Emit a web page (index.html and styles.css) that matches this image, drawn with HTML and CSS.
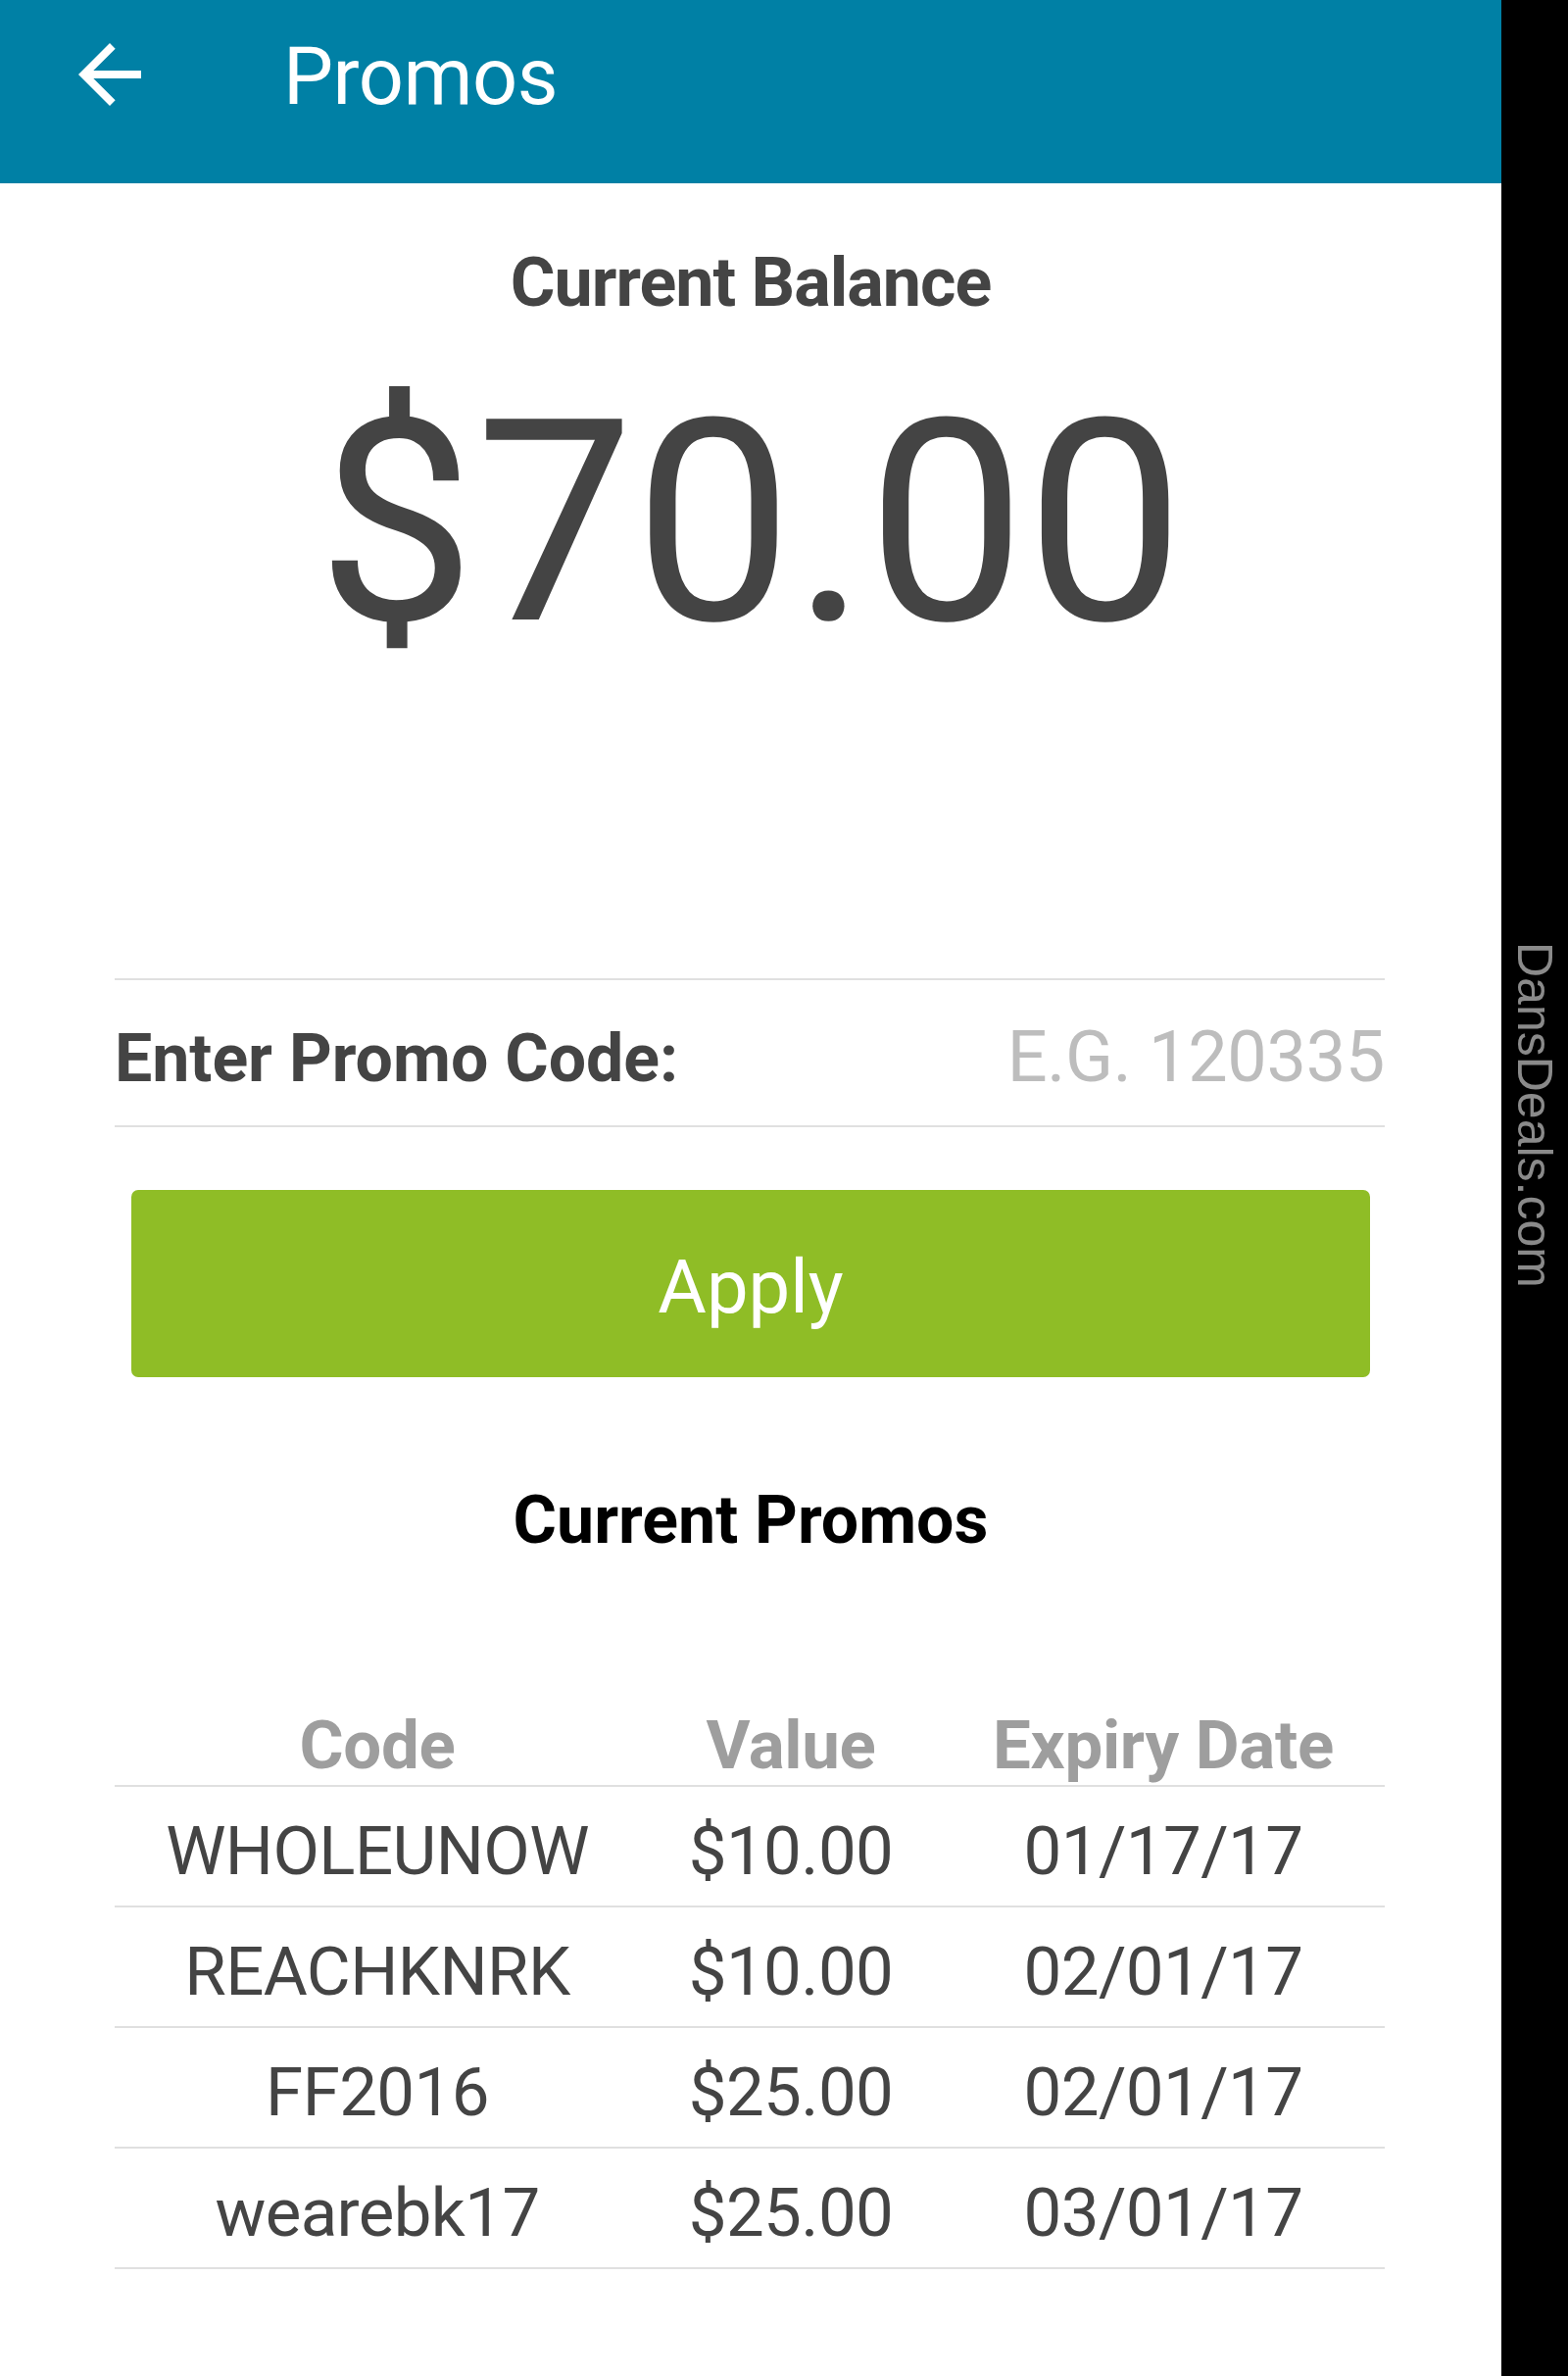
FILE: index.html
```html
<!DOCTYPE html>
<html lang="en">
<head>
<meta charset="utf-8">
<title>Promos</title>
<link rel="stylesheet" href="styles.css">
</head>
<body>
<div class="screen">
  <main class="app">
    <header class="appbar">
      <button class="back" aria-label="Back">
        <svg viewBox="0 0 24 24" width="96" height="96"><path d="M20 11H7.83l5.59-5.59L12 4l-8 8 8 8 1.41-1.41L7.83 13H20v-2z" fill="#ffffff"/></svg>
      </button>
      <h1 class="title">Promos</h1>
    </header>

    <section class="balance">
      <div class="balance-label">Current Balance</div>
      <div class="balance-amount">$70.00</div>
    </section>

    <section class="promo-form">
      <label class="promo-row">
        <span class="promo-label">Enter Promo Code:</span>
        <input class="promo-input" type="text" placeholder="E.G. 120335">
      </label>
      <button class="apply">Apply</button>
    </section>

    <h2 class="promos-title">Current Promos</h2>

    <div class="promo-table">
      <div class="tr th"><div>Code</div><div>Value</div><div>Expiry Date</div></div>
      <div class="tr"><div>WHOLEUNOW</div><div>$10.00</div><div>01/17/17</div></div>
      <div class="tr"><div>REACHKNRK</div><div>$10.00</div><div>02/01/17</div></div>
      <div class="tr"><div>FF2016</div><div>$25.00</div><div>02/01/17</div></div>
      <div class="tr"><div>wearebk17</div><div>$25.00</div><div>03/01/17</div></div>
    </div>
  </main>
  <aside class="strip">
    <span class="watermark">DansDeals.com</span>
  </aside>
</div>
</body>
</html>
```

FILE: styles.css
```css
html, body {
  margin: 0;
  padding: 0;
  background: #ffffff;
}

.screen {
  display: flex;
  width: 1600px;
  min-height: 2424px;
  font-family: Roboto, "Noto Sans", sans-serif;
}

.app {
  width: 1532px;
  flex: none;
  background: #ffffff;
}

.appbar {
  height: 187px;
  box-sizing: border-box;
  background: #0080a5;
  display: flex;
  align-items: flex-start;
  padding: 28px 0 0 64px;
}

.back {
  width: 96px;
  height: 96px;
  padding: 0;
  margin: 0;
  border: none;
  background: transparent;
  display: block;
}

.back svg {
  display: block;
}

.title {
  margin: 0 0 0 129px;
  padding-top: 3px;
  font-size: 81px;
  line-height: 96px;
  font-weight: 400;
  letter-spacing: -0.5px;
  color: #ffffff;
}

.balance {
  text-align: center;
  color: #444444;
}

.balance-label {
  margin-top: 60px;
  font-size: 70px;
  line-height: 82px;
  font-weight: 700;
  letter-spacing: -1px;
}

.balance-amount {
  margin-top: 61px;
  font-size: 288px;
  line-height: 288px;
  font-weight: 400;
}

.promo-form {
  margin: 320px 119px 0 117px;
}

.promo-row {
  display: flex;
  justify-content: space-between;
  align-items: baseline;
  height: 152px;
  box-sizing: border-box;
  border-top: 2px solid #e0e0e0;
  border-bottom: 2px solid #e0e0e0;
  padding-top: 10px;
}

.promo-label {
  font-size: 68px;
  line-height: 138px;
  font-weight: 700;
  color: #444444;
}

.promo-input {
  width: 640px;
  height: 138px;
  padding: 0;
  margin: 0;
  border: none;
  outline: none;
  background: transparent;
  text-align: right;
  font-family: Roboto, "Noto Sans", sans-serif;
  font-size: 72px;
  line-height: 138px;
  letter-spacing: -0.3px;
  color: #444444;
}

.promo-input::placeholder {
  color: #bdbdbd;
  opacity: 1;
}

.apply {
  display: block;
  width: calc(100% - 32px);
  height: 191px;
  margin: 64px 15px 0 17px;
  padding: 7px 0 0;
  border: none;
  border-radius: 7px;
  background: #8fbd26;
  color: #ffffff;
  font-family: Roboto, "Noto Sans", sans-serif;
  font-size: 76px;
  line-height: 89px;
  font-weight: 400;
}

.promos-title {
  margin: 106px 0 0;
  text-align: center;
  font-size: 68px;
  line-height: 80px;
  font-weight: 700;
  color: #000000;
}

.promo-table {
  margin: 150px 119px 0 117px;
}

.tr {
  display: grid;
  grid-template-columns: 536px 308px 1fr;
  text-align: center;
  border-bottom: 2px solid #e0e0e0;
  font-size: 69px;
  line-height: 111px;
  padding-top: 10px;
  letter-spacing: -0.6px;
  color: #444444;
  white-space: nowrap;
}

.tr.th {
  padding-top: 0;
  line-height: 80px;
  font-weight: 700;
  letter-spacing: -0.3px;
  color: #9e9e9e;
}

.strip {
  width: 68px;
  flex: none;
  background: #000000;
  display: flex;
  justify-content: center;
  align-items: flex-start;
  padding-top: 961px;
  box-sizing: border-box;
}

.watermark {
  writing-mode: vertical-rl;
  font-family: "Liberation Sans", Arial, sans-serif;
  font-size: 50px;
  line-height: 56px;
  color: #8a8a8a;
  white-space: nowrap;
}
```
